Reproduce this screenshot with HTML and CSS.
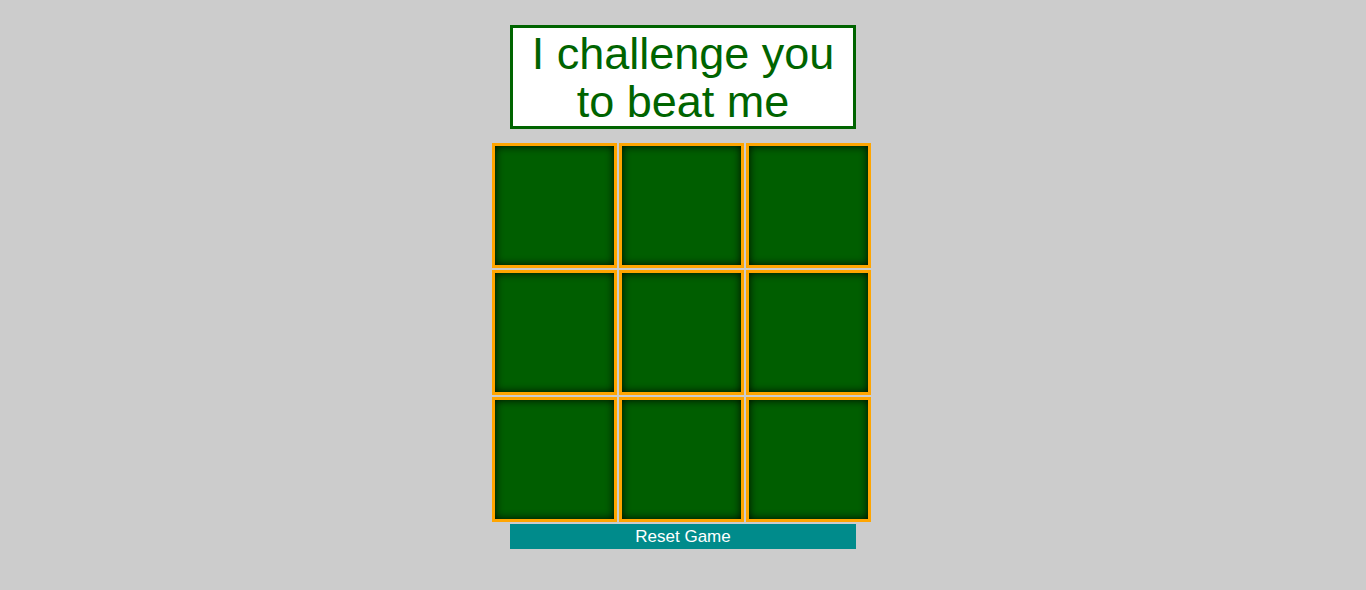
FILE: index.html
```html
<!DOCTYPE html>
<html>
<head>
<meta charset="utf-8">
<link rel="stylesheet" href="styles.css">
</head>
<body>
<main class="game">
  <h1 class="title">I challenge you to beat me</h1>
  <div class="board">
    <div class="cell"></div><div class="cell"></div><div class="cell"></div>
    <div class="cell"></div><div class="cell"></div><div class="cell"></div>
    <div class="cell"></div><div class="cell"></div><div class="cell"></div>
  </div>
  <button class="reset">Reset Game</button>
</main>
</body>
</html>
```
FILE: styles.css
```css
html, body {
  margin: 0;
  padding: 0;
  background: #cccccc;
  font-family: "Liberation Sans", Arial, sans-serif;
}
.game {
  display: flex;
  flex-direction: column;
  align-items: center;
  padding-top: 25px;
}
.title {
  box-sizing: border-box;
  width: 346px;
  height: 104px;
  margin: 0;
  border: 3px solid #006400;
  background: #ffffff;
  color: #006400;
  font-size: 45px;
  font-weight: normal;
  line-height: 48px;
  text-align: center;
  padding: 2px 8px 0;
}
.board {
  margin-top: 14px;
  margin-right: 3px;
  display: grid;
  grid-template-columns: repeat(3, 125px);
  grid-auto-rows: 125px;
  gap: 2px;
}
.cell {
  box-sizing: border-box;
  border: 3px solid #ffa500;
  background: #005e00;
  box-shadow: inset 0 0 9px rgba(0, 0, 0, 0.9);
}
.reset {
  margin-top: 2px;
  width: 346px;
  height: 25px;
  border: none;
  background: #008b8b;
  color: #ffffff;
  font-family: "Liberation Sans", Arial, sans-serif;
  font-size: 17px;
  padding: 0;
}
```
